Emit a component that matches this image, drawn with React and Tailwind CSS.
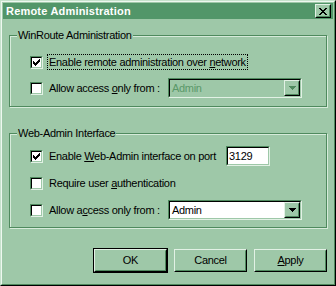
import React from "react";

// Win95-style dialog, green colour scheme

function CheckMark() {
  return (
    <svg width="7" height="7" viewBox="0 0 7 7" shapeRendering="crispEdges">
      <path
        d="M6 0h1v3h-1zM5 1h1v3h-1zM4 2h1v3h-1zM3 3h1v3h-1zM2 4h1v3h-1zM1 3h1v3h-1zM0 2h1v3h-1z"
        fill="black"
      />
    </svg>
  );
}

function Check({ checked }) {
  return (
    <div className="w-[13px] h-[13px] shrink-0 border border-t-[#4f8a5e] border-l-[#4f8a5e] border-b-[#e2f1e5] border-r-[#e2f1e5]">
      <div className="w-full h-full flex items-center justify-center bg-white border border-t-black border-l-black border-b-[#9ec8a8] border-r-[#9ec8a8]">
        {checked && <CheckMark />}
      </div>
    </div>
  );
}

function Arrow({ color }) {
  return (
    <svg width="7" height="4" viewBox="0 0 7 4" shapeRendering="crispEdges">
      <path d="M0 0h7v1h-7zM1 1h5v1h-5zM2 2h3v1h-3zM3 3h1v1h-1z" fill={color} />
    </svg>
  );
}

function Sunken({ className, innerClassName, children }) {
  return (
    <div className={"shrink-0 border border-t-[#4f8a5e] border-l-[#4f8a5e] border-b-[#e2f1e5] border-r-[#e2f1e5] " + className}>
      <div className={"w-full h-full border border-t-black border-l-black border-b-[#9ec8a8] border-r-[#9ec8a8] " + innerClassName}>
        {children}
      </div>
    </div>
  );
}

function Combo({ value, disabled }) {
  return (
    <Sunken
      className="w-[134px] h-[20px]"
      innerClassName={disabled ? "flex items-center bg-[#9ec8a8]" : "flex items-center bg-white"}
    >
      <span className={disabled ? "flex-1 pl-[2px] text-[#5a9868]" : "flex-1 pl-[2px] text-black"}>
        {value}
      </span>
      <div className="w-[16px] h-[16px] border border-t-[#e2f1e5] border-l-[#e2f1e5] border-b-black border-r-black">
        <div className="w-full h-full flex items-center justify-center bg-[#9ec8a8] border border-t-[#9ec8a8] border-l-[#9ec8a8] border-b-[#4f8a5e] border-r-[#4f8a5e]">
          <Arrow color={disabled ? "#4f8a5e" : "black"} />
        </div>
      </div>
    </Sunken>
  );
}

function Group({ title, className, children }) {
  return (
    <div
      className={
        "relative mx-[6px] border border-[#4f8a5e] shadow-[inset_1px_1px_0_#d6ebda,1px_1px_0_#d6ebda] " +
        className
      }
    >
      <span className="absolute left-[7px] top-[-9px] px-[1px] bg-[#9ec8a8] leading-[16px] whitespace-nowrap">
        {title}
      </span>
      {children}
    </div>
  );
}

function Button({ children, isDefault }) {
  const face = (
    <div className="w-full h-full border border-t-[#e2f1e5] border-l-[#e2f1e5] border-b-black border-r-black">
      <div className="w-full h-full flex items-center justify-center border border-t-[#9ec8a8] border-l-[#9ec8a8] border-b-[#4f8a5e] border-r-[#4f8a5e]">
        {children}
      </div>
    </div>
  );
  if (isDefault) {
    return <div className="w-[75px] h-[25px] border border-black">{face}</div>;
  }
  return <div className="w-[75px] h-[25px] p-[1px]">{face}</div>;
}

export default function App() {
  return (
    <div className="w-[336px] h-[286px] font-['Liberation_Sans',Arial,sans-serif] text-[11px] tracking-[-0.3px] text-black whitespace-nowrap border border-t-[#c6e2cc] border-l-[#c6e2cc] border-b-black border-r-black">
      <div className="w-full h-full bg-[#9ec8a8] p-[1px] border border-t-[#eef8f0] border-l-[#eef8f0] border-b-[#4f8a5e] border-r-[#4f8a5e]">
        {/* Title bar */}
        <div className="h-[16px] bg-[#529669] flex items-center justify-between pl-[3px] pr-[2px]">
          <span className="text-white font-bold tracking-[0.2px] leading-none">Remote Administration</span>
          <div className="w-[16px] h-[14px] border border-t-[#e2f1e5] border-l-[#e2f1e5] border-b-black border-r-black">
            <div className="w-full h-full flex items-center justify-center bg-[#9ec8a8] border border-t-[#9ec8a8] border-l-[#9ec8a8] border-b-[#4f8a5e] border-r-[#4f8a5e]">
              <svg width="8" height="7" viewBox="0 0 8 7" shapeRendering="crispEdges">
                <path
                  d="M0 0h2v1h-2zM6 0h2v1h-2zM1 1h2v1h-2zM5 1h2v1h-2zM2 2h4v1h-4zM3 3h2v1h-2zM2 4h4v1h-4zM1 5h2v1h-2zM5 5h2v1h-2zM0 6h2v1h-2zM6 6h2v1h-2z"
                  fill="black"
                />
              </svg>
            </div>
          </div>
        </div>

        {/* WinRoute Administration */}
        <Group title="WinRoute Administration" className="mt-[16px] h-[72px] pt-[16px] pl-[20px]">
          <div className="h-[20px] flex items-center">
            <Check checked />
            <span className="ml-[4px] px-[1px] leading-[14px] border border-dotted border-black">
              Enable remote administration over <u>n</u>etwork
            </span>
          </div>
          <div className="mt-[6px] h-[20px] flex items-center">
            <Check />
            <span className="ml-[4px] px-[2px] w-[121px] shrink-0">
              Allow access <u>o</u>nly from :
            </span>
            <Combo value="Admin" disabled />
          </div>
        </Group>

        {/* Web-Admin Interface */}
        <Group title="Web-Admin Interface" className="mt-[26px] h-[95px] pt-[12px] pl-[20px]">
          <div className="h-[20px] flex items-center">
            <Check checked />
            <span className="ml-[4px] px-[2px] w-[179px] shrink-0">
              Enable <u>W</u>eb-Admin interface on port
            </span>
            <Sunken className="w-[44px] h-[20px]" innerClassName="flex items-center bg-white pl-[1px]">
              3129
            </Sunken>
          </div>
          <div className="mt-[7px] h-[20px] flex items-center">
            <Check />
            <span className="ml-[4px] px-[2px]">
              Require user <u>a</u>uthentication
            </span>
          </div>
          <div className="mt-[7px] h-[20px] flex items-center">
            <Check />
            <span className="ml-[4px] px-[2px] w-[121px] shrink-0">
              Allow a<u>c</u>cess only from :
            </span>
            <Combo value="Admin" />
          </div>
        </Group>

        {/* Buttons */}
        <div className="mt-[20px] mr-[5px] flex justify-end gap-[5px]">
          <Button isDefault>OK</Button>
          <Button>Cancel</Button>
          <Button>
            <span>
              <u>A</u>pply
            </span>
          </Button>
        </div>
      </div>
    </div>
  );
}
